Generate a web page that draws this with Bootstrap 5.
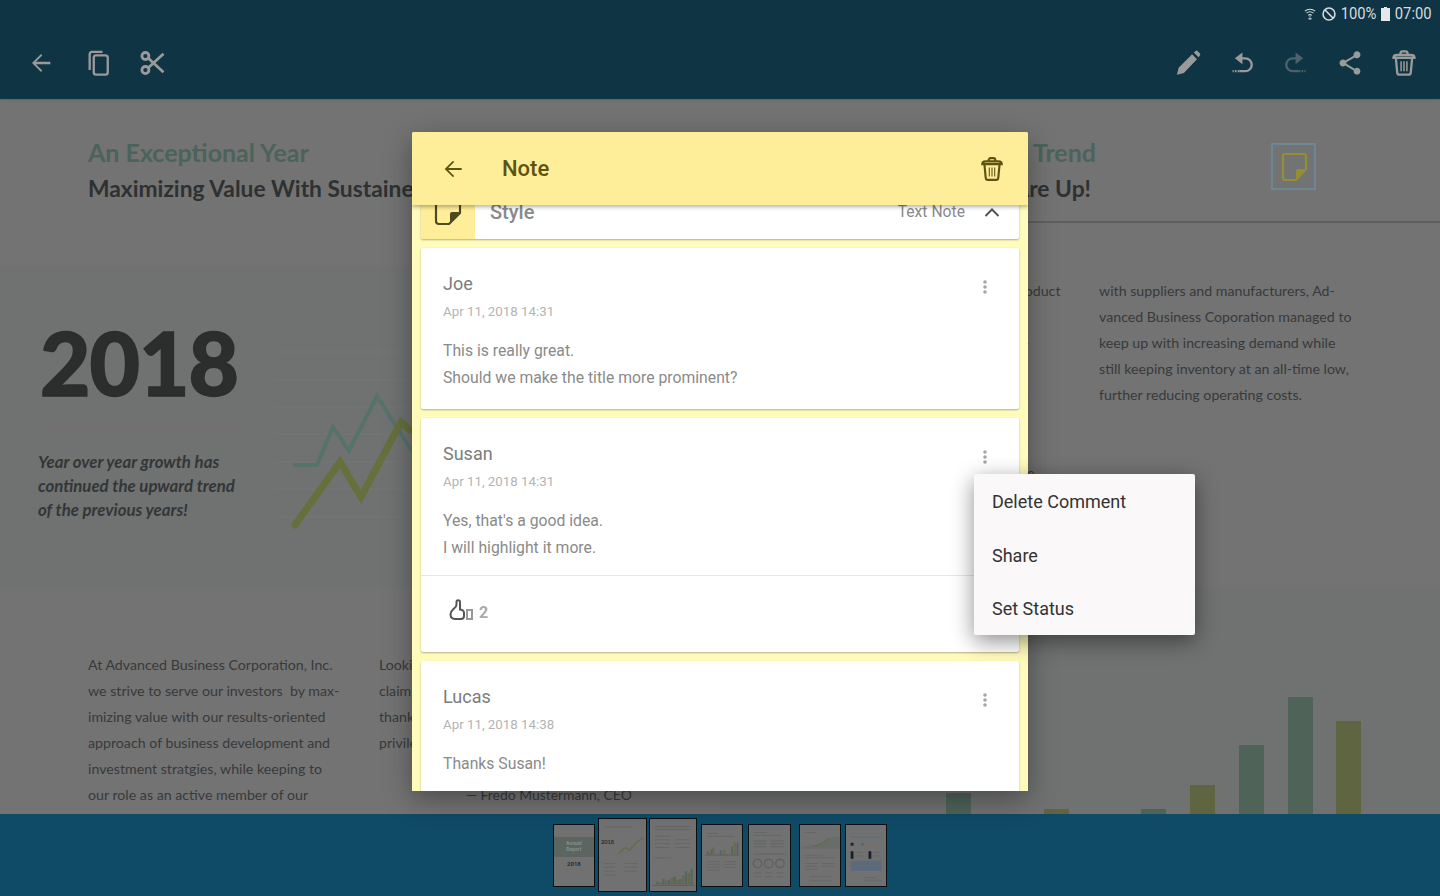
<!DOCTYPE html>
<html lang="en">
<head>
    <meta charset="UTF-8">
    <meta name="viewport" content="width=device-width, initial-scale=1.0">
    <title>Note</title>
    <link href="https://cdn.jsdelivr.net/npm/bootstrap@5.3.0/dist/css/bootstrap.min.css" rel="stylesheet">
    <style>
        html, body { height: 100%; margin: 0; overflow: hidden; background: #737373; }
        .app-frame { width: 1440px; height: 896px; font-family: Roboto, sans-serif; }

        /* top bar */
        .top-bar { height: 99px; background: #0f3443; box-shadow: 0 1px 2px #5d6468; position: relative; z-index: 1; flex: none; }
        .status-row { height: 28px; padding-right: 6px; color: #d6dcdf; font-size: 17px; }
        .status-row > * { margin-left: 2px; }
        .status-row span { transform: scaleX(.87); display: inline-block; }
        .status-row .wifi-mark { margin-right: 4px; }
        .tool-row { height: 71px; padding-bottom: 1px; }
        .tool-icon { position: absolute; width: 28px; height: 28px; fill: #9a9a9a; }
        .tool-icon.line { fill: none; stroke: #9a9a9a; stroke-width: 2; }
        .tool-icon.dim { opacity: .45; }

        /* document behind the note */
        .doc-area { flex: 1 1 0; min-height: 0; overflow: hidden; font-family: Lato, sans-serif; color: #333637; }
        .doc-page { width: 720px; flex: none; }
        .doc-head { padding-top: 35px; height: 166px; }
        .doc-title { font-size: 25px; line-height: 36px; font-weight: 700; color: #4a635b; white-space: nowrap; }
        .doc-sub { font-size: 22.8px; line-height: 36px; font-weight: 700; color: #2e3132; white-space: nowrap; }
        .hero-band { height: 322px; background: #707171; padding-left: 38px; }
        .hero-year { font-size: 87px; line-height: 100px; font-weight: 900; color: #2c2d2d; margin-top: 48px; letter-spacing: -1px; -webkit-text-stroke: 1.5px #2c2d2d; padding-left: 2px; }
        .hero-rule { height: 5px; width: 208px; background: #747070; margin-top: 12px; }
        .hero-text { font-size: 16.8px; line-height: 24px; font-style: italic; font-weight: 700; color: #333637; margin-top: 20px; white-space: nowrap; }
        .hero-chart { margin-left: 14px; }
        .doc-columns { padding: 65px 0 0 88px; gap: 42px; }
        .doc-text { width: 249px; font-size: 14.2px; line-height: 26px; color: #373a3b; white-space: nowrap; flex: none; }
        .doc-sign { padding-left: 87px; font-size: 13.9px; }
        .doc-rule { height: 2px; background: #5e6060; margin-top: 12px; }
        .sticky-box { width: 45px; height: 47px; border: 2px solid #6b8795; margin: 9px 0 0 175px; flex: none; }
        .right-cols { padding: 55px 0 0 88px; gap: 38px; height: 364px; }
        .right-cols .doc-text { width: 253px; }
        .chart-band { height: 227px; background: #707271; padding: 0 0 0 226px; gap: 23.8px; }
        .chart-bar { width: 25px; flex: none; }
        .bar-green { background: #4f6359; }
        .bar-olive { background: #5f6540; }

        /* thumbnails */
        .thumb-bar { height: 82px; background: #0f4a66; flex: none; position: relative; z-index: 1; }
        .thumb-page { display: block; width: 42.3px; height: 63px; background: #717171; border: 1px solid #0b0f12; flex: none; }
        .thumb-page.open { width: 48.5px; height: 74px; }
        .thumb-cover { background: #5c6560; color: #878d89; font-size: 5px; line-height: 6.500px; text-align: center; font-weight: 700; padding: 3px 0; margin-top: 12px; height: 20px; }
        .thumb-year { font-size: 6px; line-height: 8px; text-align: center; font-weight: 700; color: #2c2d2d; margin-top: 3px; }

        /* note dialog */
        .note-dialog { position: absolute; left: 412px; top: 132px; width: 616px; height: 659px; background: #fffbbb; border-radius: 2px 2px 0 0; box-shadow: 0 8px 28px rgba(0,0,0,.35); overflow: hidden; z-index: 2; }
        .note-head { height: 73px; background: #ffee99; padding: 0 23px 0 28px; color: #5d5312; box-shadow: 0 2px 4px rgba(0,0,0,.3); position: relative; z-index: 1; flex: none; }
        .note-head h1 { font-size: 22px; font-weight: 500; margin: 0 0 0 36px; line-height: 73px; }
        .note-list { padding: 0 9px; gap: 9px; margin-top: -20px; }
        .style-card { height: 54px; background: #fff; border-radius: 2px; box-shadow: 0 1px 2px rgba(0,0,0,.3); color: #8a8a8a; flex: none; }
        .style-swatch { width: 54px; height: 54px; background: #ffee99; flex: none; border-radius: 2px 0 0 2px; }
        .style-name { font-size: 20px; font-weight: 500; margin-left: 15px; }
        .style-value { font-size: 15.7px; margin-left: auto; }
        .comment-card { background: #fff; border: 0; border-radius: 2px; box-shadow: 0 1px 2px rgba(0,0,0,.3); flex: none; position: relative; }
        .comment-body { padding: 23px 22px 0; }
        .comment-name { font-size: 18px; line-height: 26px; color: #7c7c7c; }
        .comment-date { font-size: 13.3px; line-height: 20px; color: #b4b4b4; margin-top: 5px; margin-bottom: 15px; }
        .comment-text { font-size: 15.75px; line-height: 27px; color: #8a8a8a; }
        .kebab { position: absolute; right: 31px; top: 32px; width: 6px; height: 14px; fill: #a5a5a5; }
        .like-row { margin-top: 14px; border-top: 1px solid #e6e6e6; height: 78px; padding: 23px 0 0 28px; color: #aaa; font-size: 16px; font-weight: 700; gap: 6px; }

        /* comment menu */
        .comment-menu { display: block; position: absolute; left: 974px; top: 474px; width: 221px; height: 161px; padding: 1px 0; margin: 0; min-width: 0; background: #faf8f9; border: 0; border-radius: 2px; box-shadow: 0 6px 22px rgba(0,0,0,.45); z-index: 3; font-size: 18px; }
        .comment-menu .dropdown-item { height: 53.6px; line-height: 53px; padding: 0 18px; color: #333; }
    </style>
</head>
<body>
<div class="app-frame d-flex flex-column position-relative">

    <!-- Top bar -->
    <div class="top-bar">
        <div class="status-row d-flex align-items-center justify-content-end">
            <svg class="wifi-mark" width="12" height="15" viewBox="0 0 14 16" fill="none" stroke="#d6dcdf" stroke-width="1.200"><path d="M1 4c3.400-3 8.600-3 12 0M3 6.500c2.300-2 5.700-2 8 0M5 9c1.200-1 2.800-1 4 0"/><path d="M7 10v5M5 13h4" stroke-dasharray="1.500 1"/></svg>
            <svg width="14" height="14" viewBox="0 0 16 16" fill="none" stroke="#d6dcdf" stroke-width="1.800"><circle cx="8" cy="8" r="6.800"/><path d="M3.500 3.500l9 9"/></svg>
            <span>100%</span>
            <svg width="9" height="14" viewBox="0 0 9 14" fill="#e4e8ea"><path d="M3 0h3v1h3v13H0V1h3z"/></svg>
            <span>07:00</span>
        </div>
        <div class="tool-row position-relative">
            <svg class="tool-icon" style="left:27px;top:21px" viewBox="0 0 24 24"><path d="M20 11H7.600l5.500-5.500L12 4.300 4.300 12l7.700 7.700 1.100-1.200L7.600 13H20z"/></svg>
            <svg class="tool-icon line" style="left:85px;top:21px" viewBox="0 0 24 24"><path d="M15 2.500H6a2 2 0 0 0-2 2V18"/><rect x="7.500" y="5.500" width="12" height="16.500" rx="2"/></svg>
            <svg class="tool-icon line" style="left:139px;top:21px;stroke-width:2.400" viewBox="0 0 24 24"><circle cx="5.500" cy="6" r="3"/><circle cx="5.500" cy="18" r="3"/><path d="M8 8l13 12M8 16L21 4"/></svg>
            <svg class="tool-icon" style="left:1174px;top:21px" viewBox="0 0 24 24"><path d="M2.500 22l1.500-6L15.500 4.500l4.200 4.200L8.500 20.500zM17 3l1.200-1.100a1.500 1.500 0 0 1 2.100 0l1.800 1.800a1.500 1.500 0 0 1 0 2.100L21 7z"/></svg>
            <svg class="tool-icon line" style="left:1229px;top:21px" viewBox="0 0 24 24"><path d="M10 8h4a5.500 5.500 0 0 1 0 11H9"/><path d="M9 19H3" stroke-dasharray="1.500 1"/><path d="M11.500 3L5 8l6.500 5z" fill="#9a9a9a" stroke="none"/></svg>
            <svg class="tool-icon line dim" style="left:1281px;top:21px" viewBox="0 0 24 24"><path d="M14 8h-4a5.500 5.500 0 0 0 0 11h5"/><path d="M15 19h6" stroke-dasharray="1.500 1"/><path d="M12.500 3L19 8l-6.500 5z" fill="#9a9a9a" stroke="none"/></svg>
            <svg class="tool-icon" style="left:1336px;top:21px" viewBox="0 0 24 24"><path d="M18 16.080c-.76 0-1.440.3-1.960.77L8.910 12.700c.05-.23.09-.46.09-.7s-.04-.47-.09-.7l7.050-4.110c.54.5 1.250.81 2.040.81 1.660 0 3-1.340 3-3s-1.340-3-3-3-3 1.340-3 3c0 .24.04.47.09.7L8.040 9.810C7.500 9.310 6.790 9 6 9c-1.660 0-3 1.340-3 3s1.340 3 3 3c.79 0 1.500-.31 2.040-.81l7.120 4.160c-.05.21-.08.43-.08.65 0 1.610 1.310 2.920 2.920 2.920 1.610 0 2.920-1.310 2.920-2.920s-1.310-2.920-2.920-2.920z"/></svg>
            <svg class="tool-icon line" style="left:1390px;top:21px" viewBox="0 0 24 24"><path d="M3 7.500c0-1.500 1-2.500 3-2.500h12c2 0 3 1 3 2.500zM9 5V3.500C9 2.700 9.700 2 10.500 2h3c.8 0 1.500.7 1.500 1.500V5M5 7.500l1.200 12.700c.1 1 .9 1.800 1.800 1.800h8c.9 0 1.700-.8 1.800-1.800L19 7.500"/><path d="M9.500 10.500v8.500M12 10.500v8.500M14.500 10.500v8.500" stroke-width="1.300"/></svg>
        </div>
    </div>

    <!-- Document pages -->
    <div class="doc-area d-flex">
        <div class="doc-page">
            <div class="doc-head" style="padding-left:88px">
                <div class="doc-title">An Exceptional Year</div>
                <div class="doc-sub">Maximizing Value With Sustained Growth</div>
            </div>
            <div class="hero-band d-flex">
                <div style="width:218px">
                    <div class="hero-year">2018</div>
                    <div class="hero-rule"></div>
                    <div class="hero-text">Year over year growth has<br>continued the upward trend<br>of the previous years!</div>
                </div>
                <svg class="hero-chart" width="160" height="322" viewBox="0 0 160 322" fill="none">
                    <g stroke="#757676" stroke-width="1"><path d="M5 87h130M5 115h130M5 142h130M5 169h130M5 197h130M5 224h130M5 252h130"/></g>
                    <path d="M25 200h22l16-38 16 24 28-55 34 54" stroke="#56736b" stroke-width="4" stroke-linecap="round"/>
                    <path d="M25 260l45-63 21 35 40-75 9 8" stroke="#66703c" stroke-width="7" stroke-linecap="round"/>
                </svg>
            </div>
            <div class="doc-columns d-flex">
                <div class="doc-text">At Advanced Business Corporation, Inc.<br>we strive to serve our investors&nbsp; by max-<br>imizing value with our results-oriented<br>approach of business development and<br>investment stratgies, while keeping to<br>our role as an active member of our</div>
                <div class="doc-text">Looking<br>claim<br>thanks<br>privilege<br><br><span class="doc-sign">— Fredo Mustermann, CEO</span></div>
            </div>
        </div>
        <div class="doc-page">
            <div class="doc-head d-flex" style="height:110px;padding-left:88px">
                <div style="width:288px">
                    <div class="doc-title text-end">Continuing The Trend</div>
                    <div class="doc-sub text-end" style="padding-right:5px">Our Prospects Are Up!</div>
                </div>
                <div class="sticky-box d-flex align-items-center justify-content-center">
                    <svg width="30" height="30" viewBox="0 0 30 30" fill="none"><path d="M6 2h19a2 2 0 0 1 2 2v13l-10 11H6a2 2 0 0 1-2-2V4a2 2 0 0 1 2-2z" stroke="#948f35" stroke-width="2.200"/><path d="M27 17H19a2 2 0 0 0-2 2v9z" fill="#948f35"/></svg>
                </div>
            </div>
            <div class="doc-rule"></div>
            <div class="right-cols d-flex">
                <div class="doc-text">Through close work on our main product<br>line throughout the past fiscal year,<br>we were able to refine and then en-<br>hance our offerings to a very large<br>extent, and so increase our revenue<br>and market share. We also invested<br>in developing relations with our key<br>partners and by doing so, work close</div>
                <div class="doc-text">with suppliers and manufacturers, Ad-<br>vanced Business Coporation managed to<br>keep up with increasing demand while<br>still keeping inventory at an all-time low,<br>further reducing operating costs.</div>
            </div>
            <div class="chart-band d-flex align-items-end">
                <div class="chart-bar bar-green" style="height:21px"></div>
                <div class="chart-bar bar-olive" style="height:0"></div>
                <div class="chart-bar bar-olive" style="height:5px"></div>
                <div class="chart-bar bar-green" style="height:0"></div>
                <div class="chart-bar bar-green" style="height:5px"></div>
                <div class="chart-bar bar-olive" style="height:29px"></div>
                <div class="chart-bar bar-green" style="height:69px"></div>
                <div class="chart-bar bar-green" style="height:117px"></div>
                <div class="chart-bar bar-olive" style="height:93px"></div>
            </div>
        </div>
    </div>

    <!-- Page thumbnails -->
    <div class="thumb-bar d-flex align-items-center justify-content-center">
        <div class="thumb-page">
            <div class="thumb-cover">Annual<br>Report</div>
            <div class="thumb-year">2018</div>
        </div>
        <svg class="thumb-page open" style="margin-left:3px" viewBox="0 0 49 74"><rect x="5" y="7" width="30" height="1" fill="#626665"/><text x="2" y="25" font-size="6" font-weight="700" font-family="Lato" fill="#2c2d2d">2018</text><path d="M20 36l8-7 4 3 8-9 7-4" stroke="#666a4c" stroke-width="1.500" fill="none"/><path d="M5 46h12M5 50h12M5 54h12M5 58h12M27 46h14M27 50h14M27 54h14" stroke="#656767" stroke-width="1"/></svg>
        <svg class="thumb-page open" style="margin-left:2px" viewBox="0 0 49 74"><path d="M5 7h38M5 10h38M5 17h16M5 21h16M5 25h16M5 29h16M26 21h16M26 25h16M26 29h16M5 40h18" stroke="#626665" stroke-width="1"/><path d="M3 69h44" stroke="#5a5f55"/><g stroke-width="2.500"><path d="M8 68v-3M14 68v-6M20 68v-5M26 68v-8M32 68v-6M38 68v-14M44 68v-16" stroke="#566662"/><path d="M11 68v-2M17 68v-4M23 68v-7M29 68v-5M35 68v-10M41 68v-12" stroke="#666a4c"/></g></svg>
        <svg class="thumb-page" style="margin-left:4px" viewBox="0 0 43 63"><path d="M5 8h12M5 11h30" stroke="#626665"/><path d="M3 31h37" stroke="#5a5f55"/><g stroke-width="2"><path d="M6 31v-4M10 31v-6M20 31v-5M32 31v-9M38 31v-13" stroke="#566662"/><path d="M8 31v-3M12 31v-8M24 31v-6M35 31v-13" stroke="#666a4c"/></g><path d="M5 38h14M5 41h14M5 44h14M5 47h14M23 38h14M23 41h14M23 44h14" stroke="#656767"/></svg>
        <svg class="thumb-page" style="margin-left:5px" viewBox="0 0 43 63"><path d="M5 7h14M5 10h30M5 16h14M5 19h14M5 22h14M23 16h14M23 19h14M23 22h14M5 30h34" stroke="#626665"/><g fill="none" stroke="#5e635c" stroke-width="1.500"><circle cx="9" cy="40" r="4.500"/><circle cx="21" cy="40" r="4.500"/><circle cx="33" cy="40" r="4.500"/></g><path d="M5 50h8M17 50h8M29 50h8M5 54h8M17 54h8M29 54h8" stroke="#656767"/></svg>
        <svg class="thumb-page" style="margin-left:8px" viewBox="0 0 43 63"><path d="M5 7h12" stroke="#626665"/><path d="M0 24l12-4 8 1 10-8 13-2v13H0z" fill="#686d6a"/><path d="M14 22l6-2 5-2 6-5" stroke="#666a4c" stroke-width="1.500" fill="none"/><path d="M5 31h20M5 34h32M5 40h14M5 43h14M5 46h14M23 40h14M23 43h14M10 54h24M10 58h24" stroke="#656767"/></svg>
        <svg class="thumb-page" style="margin-left:4px" viewBox="0 0 43 63"><path d="M5 8h12M22 8h12" stroke="#65726e"/><rect x="5" y="11" width="33" height="2" fill="#5f6f78"/><rect x="5" y="18" width="3" height="3" fill="#16222b"/><rect x="16" y="18" width="3" height="3" fill="#4f6b7a"/><rect x="5" y="27" width="3" height="8" fill="#16222b"/><rect x="24" y="27" width="3" height="8" fill="#16222b"/><path d="M10 28h8M10 32h8M29 28h8M29 32h8" stroke="#656767"/><rect x="5" y="37" width="33" height="11" fill="#5c6a7c"/><path d="M20 55h12M20 58h18" stroke="#656767"/></svg>
    </div>

    <!-- Note dialog -->
    <div class="note-dialog d-flex flex-column">
        <div class="note-head d-flex align-items-center">
            <svg width="26" height="26" viewBox="0 0 24 24" fill="#5d5312"><path d="M20 11H7.600l5.500-5.500L12 4.300 4.300 12l7.700 7.700 1.100-1.200L7.600 13H20z"/></svg>
            <h1>Note</h1>
            <svg class="ms-auto" width="26" height="26" viewBox="0 0 24 24" fill="none" stroke="#5d5312" stroke-width="2"><path d="M3 7.500c0-1.500 1-2.500 3-2.500h12c2 0 3 1 3 2.500zM9 5V3.500C9 2.700 9.700 2 10.500 2h3c.8 0 1.500.7 1.500 1.500V5M5 7.500l1.200 12.700c.1 1 .9 1.800 1.800 1.800h8c.9 0 1.700-.8 1.800-1.800L19 7.500"/><path d="M9.500 10.500v8.500M12 10.500v8.500M14.500 10.500v8.500" stroke-width="1"/></svg>
        </div>
        <div class="note-list d-flex flex-column">
            <div class="style-card d-flex align-items-center">
                <div class="style-swatch d-flex align-items-center justify-content-center">
                    <svg width="30" height="30" viewBox="0 0 30 30" fill="none"><path d="M3 0v24a3 3 0 0 0 3 3h10l11-11V0" stroke="#4e4a22" stroke-width="2.200"/><path d="M27 15H19a2 2 0 0 0-2 2v10z" fill="#4e4a22"/></svg>
                </div>
                <div class="style-name">Style</div>
                <div class="style-value">Text Note</div>
                <svg style="margin:0 19px" width="16" height="10" viewBox="0 0 16 10" fill="none" stroke="#555" stroke-width="2"><path d="M1.500 9L8 2.500 14.500 9"/></svg>
            </div>
            <div class="comment-card card" style="height:161px">
                <div class="comment-body">
                    <div class="comment-name">Joe</div>
                    <div class="comment-date">Apr 11, 2018 14:31</div>
                    <div class="comment-text">This is really great.<br>Should we make the title more prominent?</div>
                </div>
                <svg class="kebab" viewBox="0 0 6 14"><circle cx="3" cy="2" r="1.800"/><circle cx="3" cy="7" r="1.800"/><circle cx="3" cy="12" r="1.800"/></svg>
            </div>
            <div class="comment-card card" style="height:234px">
                <div class="comment-body">
                    <div class="comment-name">Susan</div>
                    <div class="comment-date">Apr 11, 2018 14:31</div>
                    <div class="comment-text">Yes, that's a good idea.<br>I will highlight it more.</div>
                </div>
                <svg class="kebab" viewBox="0 0 6 14"><circle cx="3" cy="2" r="1.800"/><circle cx="3" cy="7" r="1.800"/><circle cx="3" cy="12" r="1.800"/></svg>
                <div class="like-row d-flex">
                    <svg width="24" height="24" viewBox="0 0 24 24" fill="none" stroke="#555" stroke-width="2"><path d="M6 20c-3 0-4.500-2.200-4.500-4.700 0-2.500 1.500-4 3-5.300 1.500-1.200 3-2 3-4.500V3c0-1.200.8-1.800 1.600-1.800s1.900.6 1.900 1.800v7.500c2.500.3 4 1.300 4 3.500V17c0 2-1.300 3-3 3z"/><rect x="18" y="11" width="5" height="9" stroke="#999"/></svg>
                    <span style="line-height:28px">2</span>
                </div>
            </div>
            <div class="comment-card card" style="height:200px">
                <div class="comment-body">
                    <div class="comment-name">Lucas</div>
                    <div class="comment-date">Apr 11, 2018 14:38</div>
                    <div class="comment-text">Thanks Susan!</div>
                </div>
                <svg class="kebab" viewBox="0 0 6 14"><circle cx="3" cy="2" r="1.800"/><circle cx="3" cy="7" r="1.800"/><circle cx="3" cy="12" r="1.800"/></svg>
            </div>
        </div>
    </div>

    <!-- Comment menu -->
    <ul class="dropdown-menu comment-menu list-unstyled">
        <li><a class="dropdown-item" href="#">Delete Comment</a></li>
        <li><a class="dropdown-item" href="#">Share</a></li>
        <li><a class="dropdown-item" href="#">Set Status</a></li>
    </ul>
</div>
<script src="https://cdn.jsdelivr.net/npm/bootstrap@5.3.0/dist/js/bootstrap.bundle.min.js"></script>
</body>
</html>
